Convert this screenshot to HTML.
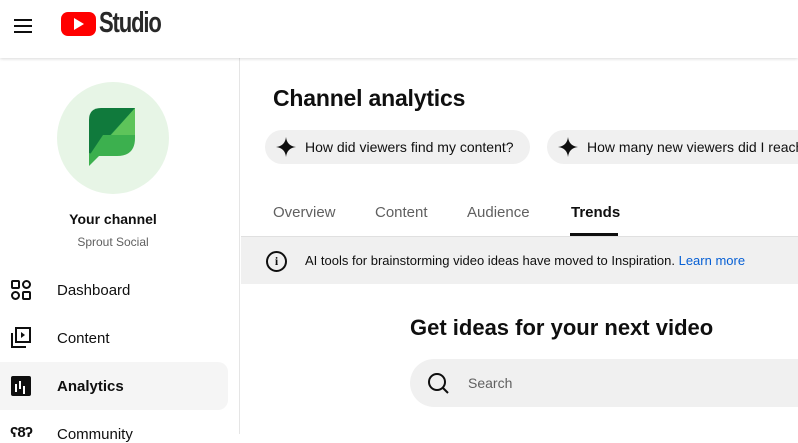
<!DOCTYPE html>
<html><head><style>
*{margin:0;padding:0;box-sizing:border-box}
body{width:798px;height:434px;overflow:hidden;background:#fff;font-family:"Liberation Sans",sans-serif;color:#0f0f0f;position:relative}
.hdr{position:absolute;left:0;top:0;width:798px;height:58px;background:#fff;box-shadow:0 1px 3px rgba(0,0,0,.15);z-index:2}
.side{position:absolute;left:0;top:58px;width:240px;height:376px;border-right:1px solid #e5e5e5}
.abs{position:absolute;white-space:nowrap}
.nav{position:absolute;left:57px;font-size:15px}
.chip{position:absolute;top:130px;height:34px;background:#f0f0f0;border-radius:17px;font-size:14px;line-height:34px;padding-left:40px}
.tab{position:absolute;top:204px;font-size:15px;color:#606060}
</style></head><body>
<div class="hdr">
 <div class="abs" style="left:14px;top:19px;width:18px;height:2px;background:#0f0f0f;box-shadow:0 6px 0 #0f0f0f,0 12px 0 #0f0f0f"></div>
 <div class="abs" style="left:61px;top:12px;width:35px;height:24px;background:#f00;border-radius:7px"></div>
 <svg class="abs" style="left:74px;top:18px" width="11" height="12"><path d="M0 0L10 6L0 12Z" fill="#fff"/></svg>
 <div class="abs" style="left:99px;top:7px;font-size:29px;font-weight:bold;letter-spacing:-1.5px;transform:scaleX(.76);transform-origin:left;color:#282828">Studio</div>
</div>
<div class="side">
 <div class="abs" style="left:57px;top:24px;width:112px;height:112px;border-radius:50%;background:#e7f5e6"></div>
 <svg class="abs" style="left:89px;top:50px" width="48" height="58" viewBox="0 0 48 58">
  <path d="M12 0H46V18L14 48H0V12Q0 0 12 0Z" fill="#107a3c"/>
  <path d="M46 0L14 35V48L46 18Z" fill="#2ba44c"/>
  <path d="M46 0L22 27H46Z" fill="#5ec45a"/>
  <path d="M14 27H46V30Q46 48 28 48H0Z" fill="#3cb04e"/>
  <path d="M0 45L10 48L0 58Z" fill="#3cb04e"/>
 </svg>
 <div class="abs" style="left:0;width:226px;text-align:center;top:153px;font-size:14px;font-weight:bold">Your channel</div>
 <div class="abs" style="left:0;width:226px;text-align:center;top:177px;font-size:12px;color:#606060">Sprout Social</div>
 <div class="abs" style="left:0;top:304px;width:228px;height:48px;background:#f5f5f5;border-radius:0 10px 10px 0"></div>
 <svg class="abs" style="left:11px;top:222px" width="20" height="20" fill="none" stroke="#0f0f0f" stroke-width="2"><rect x="1" y="1" width="7" height="7" rx="1"/><rect x="12" y="1" width="7" height="7" rx="3.5"/><rect x="1" y="12" width="7" height="7" rx="3.5"/><rect x="12" y="12" width="7" height="7" rx="1"/></svg>
 <svg class="abs" style="left:10px;top:269px" width="22" height="22" fill="none" stroke="#0f0f0f" stroke-width="2"><rect x="6" y="1" width="14" height="14"/><path d="M2 6V20H16"/><path d="M11 5V11L15 8Z" fill="#0f0f0f" stroke="none"/></svg>
 <div class="abs" style="left:11px;top:318px;width:20px;height:20px;background:#0f0f0f;border-radius:2px"></div>
 <div class="abs" style="left:15px;top:326px;width:2px;height:8px;background:#fff;box-shadow:4px -3px 0 #fff,8px 2px 0 #fff"></div>
 <div class="abs" style="left:10px;top:366px;font-size:15px;font-weight:bold;letter-spacing:-1px">ʕ8ʔ</div>
 <div class="nav" style="top:224px">Dashboard</div>
 <div class="nav" style="top:272px">Content</div>
 <div class="nav" style="top:320px;font-weight:bold">Analytics</div>
 <div class="nav" style="top:368px">Community</div>
</div>
<div class="abs" style="left:273px;top:85px;font-size:23px;letter-spacing:-.2px;color:#0f0f0f;font-weight:bold">Channel analytics</div>
<div class="chip" style="left:265px;width:265px">How did viewers find my content?</div>
<div class="chip" style="left:547px;width:300px">How many new viewers did I reach</div>
<svg class="abs" style="left:276px;top:137px" width="20" height="20"><path d="M10 0Q11 9 20 10Q11 11 10 20Q9 11 0 10Q9 9 10 0Z" fill="#0f0f0f"/></svg>
<svg class="abs" style="left:558px;top:137px" width="20" height="20"><path d="M10 0Q11 9 20 10Q11 11 10 20Q9 11 0 10Q9 9 10 0Z" fill="#0f0f0f"/></svg>
<div class="tab" style="left:273px">Overview</div>
<div class="tab" style="left:375px">Content</div>
<div class="tab" style="left:467px">Audience</div>
<div class="tab" style="left:571px;color:#0f0f0f;font-weight:bold">Trends</div>
<div class="abs" style="left:570px;top:233px;width:48px;height:3px;background:#0f0f0f"></div>
<div class="abs" style="left:241px;top:236px;width:557px;height:48px;background:#f0f0f0;border-top:1px solid #e0e0e0"></div>
<div class="abs" style="left:266px;top:251px;width:21px;height:21px;border:2px solid #0f0f0f;border-radius:50%;font-size:12px;font-weight:bold;text-align:center;line-height:17px;font-family:'Liberation Serif',serif">i</div>
<div class="abs" style="left:305px;top:253px;font-size:13px;color:#0f0f0f">AI tools for brainstorming video ideas have moved to Inspiration. <span style="color:#065fd4">Learn more</span></div>
<div class="abs" style="left:410px;top:315px;font-size:22px;font-weight:bold">Get ideas for your next video</div>
<div class="abs" style="left:410px;top:359px;width:420px;height:48px;background:#f0f0f0;border-radius:24px"></div>
<svg class="abs" style="left:427px;top:372px" width="24" height="24" fill="none" stroke="#0f0f0f" stroke-width="2"><circle cx="10" cy="10" r="8"/><path d="M15.5 15.5L21 21"/></svg>
<div class="abs" style="left:468px;top:375px;font-size:14px;color:#606060">Search</div>
</body></html>
